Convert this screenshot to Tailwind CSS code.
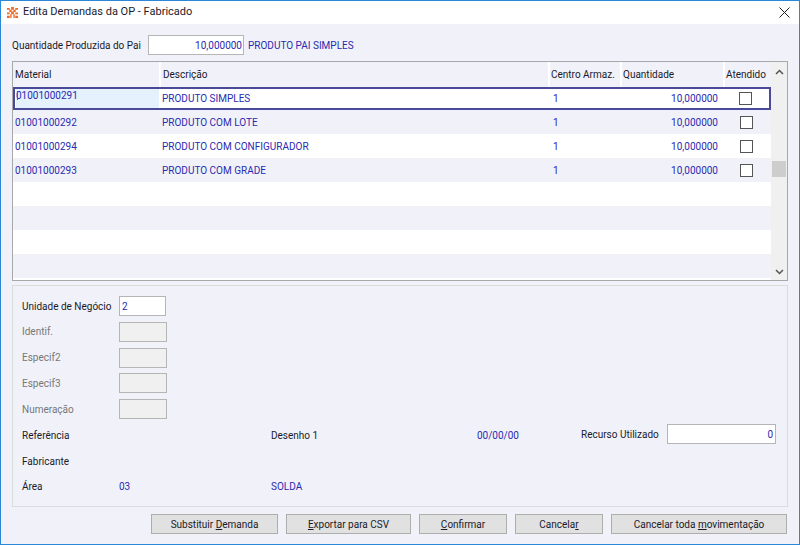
<!DOCTYPE html>
<html lang="pt">
<head>
    <meta charset="UTF-8">
    <title>Edita Demandas da OP - Fabricado</title>
    <script src="https://cdn.jsdelivr.net/npm/@tailwindcss/browser@4"></script>
</head>
<body class="font-['Roboto',sans-serif] text-[10px] text-[#1a1a2a]">
    <div class="w-[800px] h-[545px] border border-[#2b88d8] flex flex-col bg-[#f1f2f9] overflow-hidden">
        <!-- title bar -->
        <div class="h-[23px] bg-white flex items-center pl-[6px] shrink-0">
            <svg width="11" height="11" viewBox="0 0 12 12" class="mr-[5px]">
                <path d="M0 1h3v2H0zM4.500 0h3v3h-3zM9 1h3v2H9zM2.500 3h2.500v2.500H2.500zM7 3h2.500v2.500H7zM0 6h3v2H0zM4.500 5h3v3h-3zM9 6h3v2H9zM0 9.500h3V12H0zM3.500 8H5v4H3.500zM7 8h1.500v4H7zM9 9.500h3V12H9z" fill="#ee6a2a"/>
            </svg>
            <span class="text-[11px]">Edita Demandas da OP - Fabricado</span>
            <svg width="11" height="11" viewBox="0 0 11 11" class="ml-auto mr-[9px]">
                <path d="M.5.5l10 10M10.500.5l-10 10" stroke="#222" fill="none"/>
            </svg>
        </div>

        <!-- quantidade -->
        <div class="h-[20px] mt-[11px] ml-[11px] flex items-center shrink-0">
            <span class="w-[136px]">Quantidade Produzida do Pai</span>
            <div class="w-[96px] h-[20px] bg-white border border-[#b5b5b5] text-right pr-[1px] leading-[20px] text-[#2a2ab0]">10,000000</div>
            <span class="ml-[4px] text-[#2a2ab0]">PRODUTO PAI SIMPLES</span>
        </div>

        <!-- grid -->
        <div class="h-[220px] mt-[6px] ml-[11px] w-[776px] border border-[#a8a8a8] bg-white flex shrink-0">
            <div class="w-[758px] flex flex-col">
                <div class="h-[25px] flex bg-[#f1f2f9] items-center shrink-0">
                    <div class="w-[148px] pl-[2px] border-r-2 border-white h-full leading-[25px]">Material</div>
                    <div class="w-[389px] pl-[2px] border-r-2 border-white h-full leading-[25px]">Descrição</div>
                    <div class="w-[72px] pl-[1px] border-r-2 border-white h-full leading-[25px]">Centro Armaz.</div>
                    <div class="w-[103px] pl-[1px] border-r-2 border-white h-full leading-[25px]">Quantidade</div>
                    <div class="w-[46px] pl-[1px] h-full leading-[25px]">Atendido</div>
                </div>
                <!-- selected row -->
                <div class="h-[23px] flex items-center border-2 border-[#4a4a9a] text-[#2a2ab0] shrink-0">
                    <div class="w-[143px] ml-[1px] h-[19px] bg-[#e5f1fd] leading-[13px] relative">01001000291<span class="absolute left-[1px] top-[2px] w-[1px] h-[9px] bg-[#3f6f5a]"></span></div>
                    <div class="w-[391px] pl-[3px]">PRODUTO SIMPLES</div>
                    <div class="w-[72px] pl-[3px]">1</div>
                    <div class="w-[96px] text-right">10,000000</div>
                    <div class="flex-1 flex justify-center pl-[4px]"><div class="w-[13px] h-[13px] border border-[#555] bg-white"></div></div>
                </div>
                <div class="h-[24px] flex items-center bg-[#f1f2f9] text-[#2a2ab0] shrink-0">
                    <div class="w-[146px] pl-[2px]">01001000292</div>
                    <div class="w-[391px] pl-[3px]">PRODUTO COM LOTE</div>
                    <div class="w-[72px] pl-[3px]">1</div>
                    <div class="w-[96px] text-right">10,000000</div>
                    <div class="flex-1 flex justify-center pl-[4px]"><div class="w-[13px] h-[13px] border border-[#555] bg-white"></div></div>
                </div>
                <div class="h-[24px] flex items-center text-[#2a2ab0] shrink-0">
                    <div class="w-[146px] pl-[2px]">01001000294</div>
                    <div class="w-[391px] pl-[3px]">PRODUTO COM CONFIGURADOR</div>
                    <div class="w-[72px] pl-[3px]">1</div>
                    <div class="w-[96px] text-right">10,000000</div>
                    <div class="flex-1 flex justify-center pl-[4px]"><div class="w-[13px] h-[13px] border border-[#555] bg-white"></div></div>
                </div>
                <div class="h-[24px] flex items-center bg-[#f1f2f9] text-[#2a2ab0] shrink-0">
                    <div class="w-[146px] pl-[2px]">01001000293</div>
                    <div class="w-[391px] pl-[3px]">PRODUTO COM GRADE</div>
                    <div class="w-[72px] pl-[3px]">1</div>
                    <div class="w-[96px] text-right">10,000000</div>
                    <div class="flex-1 flex justify-center pl-[4px]"><div class="w-[13px] h-[13px] border border-[#555] bg-white"></div></div>
                </div>
                <div class="h-[24px] shrink-0"></div>
                <div class="h-[24px] bg-[#f1f2f9] shrink-0"></div>
                <div class="h-[24px] shrink-0"></div>
                <div class="h-[24px] bg-[#f1f2f9] shrink-0"></div>
            </div>
            <!-- scrollbar -->
            <div class="flex-1 bg-[#f0f0f0] flex flex-col items-center justify-between relative">
                <svg width="9" height="6" viewBox="0 0 9 6" class="mt-[7px]"><path d="M1 5l3.500-3.500L8 5" stroke="#555" stroke-width="1.500" fill="none"/></svg>
                <div class="absolute top-[99px] left-[1px] w-[14px] h-[16px] bg-[#cdcdcd]"></div>
                <svg width="9" height="6" viewBox="0 0 9 6" class="mb-[5px]"><path d="M1 1l3.500 3.500L8 1" stroke="#555" stroke-width="1.500" fill="none"/></svg>
            </div>
        </div>

        <!-- detail panel -->
        <div class="h-[222px] mt-[4px] ml-[11px] w-[776px] border border-[#dcdcdc] pl-[9px] pt-[10px] shrink-0">
            <div class="flex flex-col gap-[5.75px] w-[150px]">
                <div class="h-[20px] flex items-center"><span class="w-[97px]">Unidade de Negócio</span><div class="w-[47px] h-[20px] bg-white border border-[#b5b5b5] pl-[2px] leading-[20px] text-[#2a2ab0]">2</div></div>
                <div class="h-[20px] flex items-center text-[#777]"><span class="w-[97px]">Identif.</span><div class="w-[48px] h-[20px] bg-[#f0f0f0] border border-[#b5b5b5]"></div></div>
                <div class="h-[20px] flex items-center text-[#777]"><span class="w-[97px]">Especif2</span><div class="w-[48px] h-[20px] bg-[#f0f0f0] border border-[#b5b5b5]"></div></div>
                <div class="h-[20px] flex items-center text-[#777]"><span class="w-[97px]">Especif3</span><div class="w-[48px] h-[20px] bg-[#f0f0f0] border border-[#b5b5b5]"></div></div>
                <div class="h-[20px] flex items-center text-[#777]"><span class="w-[97px]">Numeração</span><div class="w-[48px] h-[20px] bg-[#f0f0f0] border border-[#b5b5b5]"></div></div>
            </div>
            <div class="h-[20px] mt-[5px] flex items-center">
                <span class="w-[249px] pt-[2px]">Referência</span>
                <span class="w-[206px] pt-[2px]">Desenho 1</span>
                <span class="w-[104px] pt-[2px] text-[#2a2ab0]">00/00/00</span>
                <span class="w-[86px]">Recurso Utilizado</span>
                <div class="w-[109px] h-[20px] bg-white border border-[#b5b5b5] text-right pr-[2px] leading-[20px] text-[#2a2ab0]">0</div>
            </div>
            <div class="h-[20px] mt-[6px] pt-[2px] flex items-center">Fabricante</div>
            <div class="h-[20px] mt-[5px] pt-[2px] flex items-center">
                <span class="w-[97px]">Área</span>
                <span class="w-[152px] text-[#2a2ab0]">03</span>
                <span class="text-[#2a2ab0]">SOLDA</span>
            </div>
        </div>

        <!-- buttons -->
        <div class="h-[20px] mt-[7px] ml-[150px] flex gap-[8px] shrink-0">
            <button class="w-[127px] h-[20px] bg-[#e1e1e1] border border-[#adadad]">Substituir <u>D</u>emanda</button>
            <button class="w-[125px] h-[20px] bg-[#e1e1e1] border border-[#adadad]"><u>E</u>xportar para CSV</button>
            <button class="w-[88px] h-[20px] bg-[#e1e1e1] border border-[#adadad]"><u>C</u>onfirmar</button>
            <button class="w-[88px] h-[20px] bg-[#e1e1e1] border border-[#adadad]">Cancela<u>r</u></button>
            <button class="w-[176px] h-[20px] bg-[#e1e1e1] border border-[#adadad]">Cancelar toda <u>m</u>ovimentação</button>
        </div>
    </div>
</body>
</html>
